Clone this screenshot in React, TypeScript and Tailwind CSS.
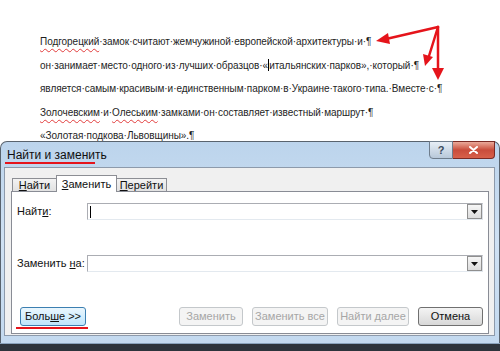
import React from 'react';

const wavy = 'underline decoration-wavy decoration-[#e23c3c] decoration-[1px] underline-offset-[3px]';

function Btn({ label, kind }: { label: React.ReactNode; kind: 'hover' | 'off' | 'normal' }) {
  const cls =
    kind === 'hover'
      ? 'border-[#3c7fb1] bg-gradient-to-b from-[#eaf6fd] to-[#bee6fd] text-[#111]'
      : kind === 'off'
        ? 'border-[#c4c8cb] bg-[#f4f4f4] text-[#a6a6a6]'
        : 'border-[#707070] bg-gradient-to-b from-[#f4f4f4] to-[#d8d8d8] text-[#111]';
  return (
    <div className={`h-[19px] flex items-center justify-center rounded-[3px] border text-[11px] ${cls}`}>
      {label}
    </div>
  );
}

function Combo({ cursor }: { cursor?: boolean }) {
  return (
    <div className="flex-1 h-[17px] border border-[#abadb3] border-b-[#e3e9ef] border-r-[#dbdfe6] bg-white flex items-center">
      <div className="flex-1 pl-[2px] flex items-center">
        {cursor && <div className="w-[1px] h-[12px] bg-black" />}
      </div>
      <div className="w-[15px] h-[15px] border border-[#8f8f8f] bg-gradient-to-b from-[#f6f6f6] to-[#dcdcdc] flex items-center justify-center">
        <svg width="7" height="4" viewBox="0 0 7 4">
          <path d="M0 0h7L3.5 4z" fill="#111" />
        </svg>
      </div>
    </div>
  );
}

export default function App() {
  return (
    <div className="relative w-[500px] h-[351px] overflow-hidden bg-white font-['Liberation_Sans',sans-serif]">
      {/* document */}
      <div className="h-[141px] overflow-hidden pl-[40px] pt-[30px] text-[10px] leading-[23.5px] text-[#1e1e1e] whitespace-nowrap tracking-[-0.05px]">
        <div>
          <span className={wavy}>Подгорецкий</span>·замок·считают·жемчужиной·европейской·архитектуры·и·¶
        </div>
        <div className="flex items-center h-[23.5px]">
          он·занимает·место·одного·из·лучших·образцов·«
          <span className="inline-block w-[1px] h-[12px] bg-black" />
          итальянских·парков»,·который·¶
        </div>
        <div>является·самым·красивым·и·единственным·парком·в·Украине·такого·типа.·Вместе·с·¶</div>
        <div>
          <span className={wavy}>Золочевским</span>·и·<span className={wavy}>Олеським</span>·замками·он·составляет·известный·маршрут·¶
        </div>
        <div>
          «Золотая·подкова·<span className={wavy}>Львовщины</span>».¶
        </div>
      </div>

      {/* arrows */}
      <svg className="absolute left-0 top-0" width="500" height="100" viewBox="0 0 500 100">
        <g stroke="#e5141b" strokeWidth="2.5" fill="none" strokeLinecap="round">
          <path d="M438 27L386 39" />
          <path d="M438 27L429 56" />
          <path d="M438 27L438 70" />
        </g>
        <g fill="#e5141b">
          <path d="M376 41L388 33L390 44z" />
          <path d="M425 66L423 54L433 57z" />
          <path d="M438 80L432 68L444 68z" />
        </g>
      </svg>

      {/* dialog */}
      <div className="h-[202px] rounded-t-[7px] border border-b-0 border-[#59636e] bg-gradient-to-b from-[#bcd4ec] via-[#cfe1f3] to-[#c3d9ef] flex flex-col">
        <div className="h-[25px] flex items-center pl-[6px] relative">
          <span className="text-[12px] text-[#0f0f0f]">Найти и заменить</span>
          <div className="absolute right-[4px] top-[-1px] flex">
            <div className="w-[24px] h-[18px] rounded-bl-[4px] border border-[#6f7d8c] bg-gradient-to-b from-[#e7eef6] to-[#b8c8d9] flex items-center justify-center text-[11px] font-bold text-[#3a4a5c]">
              ?
            </div>
            <div className="w-[42px] h-[18px] rounded-br-[4px] border border-l-0 border-[#7a2a24] bg-gradient-to-b from-[#e9a99a] via-[#c94c3b] to-[#d8604a] flex items-center justify-center">
              <svg width="9" height="8" viewBox="0 0 9 8">
                <path d="M1 1l7 6M8 1L1 7" stroke="#fff" strokeWidth="2" strokeLinecap="round" />
              </svg>
            </div>
          </div>
        </div>

        <div className="h-[169px] ml-[3px] mr-[4px] border border-[#8d9aab] bg-[#f0f0f0] flex flex-col pl-[6px] pr-[5px]">
          <div className="flex items-end h-[23px] pl-[1px] text-[11px] text-[#111]">
            <div className="h-[14px] w-[45px] border border-b-0 border-[#8c8e94] bg-gradient-to-b from-[#f3f3f3] to-[#e0e0e0] flex items-center justify-center mb-[-1px]">
              <span><u>Н</u>айти</span>
            </div>
            <div className="h-[17px] w-[61px] border border-b-0 border-[#8c8e94] bg-white flex items-center justify-center mb-[-1px] relative z-10 ml-[-1px]">
              <span><u>З</u>аменить</span>
            </div>
            <div className="h-[14px] w-[51px] border border-b-0 border-[#8c8e94] bg-gradient-to-b from-[#f3f3f3] to-[#e0e0e0] flex items-center justify-center mb-[-1px] ml-[-1px]">
              <span><u>П</u>ерейти</span>
            </div>
          </div>
          <div className="h-[143px] border border-[#898c95] bg-white flex flex-col pt-[11px] pl-[5px] pr-[5px] text-[11px] text-[#111]">
            <div className="flex items-center">
              <span className="w-[70px]">Найт<u>и</u>:</span>
              <Combo cursor />
            </div>
            <div className="flex items-center mt-[35px]">
              <span className="w-[70px]">Заменить <u>н</u>а:</span>
              <Combo />
            </div>
            <div className="flex mt-[35px] pl-[3px]">
              <div className="w-[66px] relative">
                <Btn kind="hover" label={<span>Боль<u>ш</u>е &gt;&gt;</span>} />
                <div className="absolute left-[-4px] right-[-2px] top-[20px] h-[2px] bg-[#e5141b]" />
              </div>
              <div className="flex-1" />
              <div className="flex gap-[9px]">
                <div className="w-[64px]"><Btn kind="off" label="Заменить" /></div>
                <div className="w-[76px]"><Btn kind="off" label="Заменить все" /></div>
                <div className="w-[72px]"><Btn kind="off" label="Найти далее" /></div>
                <div className="w-[65px]"><Btn kind="normal" label="Отмена" /></div>
              </div>
            </div>
          </div>
        </div>
        <div className="flex-1" />
      </div>
      <div className="h-[8px] bg-[#2d343c] border-t border-[#8aa3bd]" />

      {/* title annotation underline */}
      <div className="absolute left-[5px] top-[162px] w-[90px] h-[2px] bg-[#e5141b]" />
    </div>
  );
}
